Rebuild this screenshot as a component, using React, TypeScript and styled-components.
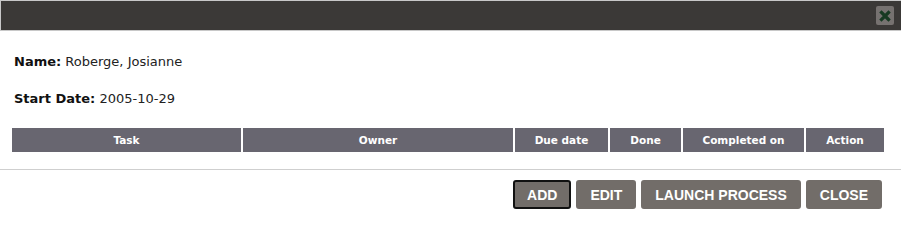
import React, { FC } from "react"
import styled, { createGlobalStyle } from "styled-components"

const columns = [
	{ label: "Task", width: 229 },
	{ label: "Owner", width: 270 },
	{ label: "Due date", width: 93 },
	{ label: "Done", width: 71 },
	{ label: "Completed on", width: 121 },
	{ label: "Action", width: 78 },
]

const actions = ["Add", "Edit", "Launch process", "Close"]

const App: FC = () => {
	return (
		<>
			<GlobalStyle />
			<Dialog>
				<TitleBar>
					<CloseIcon aria-label="close">
						<svg width="12" height="12" viewBox="0 0 12 12">
							<path d="M2.5 2.5 L9.5 9.5 M9.5 2.5 L2.5 9.5" stroke="#173a22" strokeWidth="3.2" strokeLinecap="square" />
						</svg>
					</CloseIcon>
				</TitleBar>
				<Content>
					<Field>
						<Label>Name:</Label> Roberge, Josianne
					</Field>
					<Field>
						<Label>Start Date:</Label> 2005-10-29
					</Field>
					<HeaderRow $cols={columns.map((c) => c.width + "px").join(" ")}>
						{columns.map((c) => (
							<HeaderCell key={c.label}>{c.label}</HeaderCell>
						))}
					</HeaderRow>
				</Content>
				<Footer>
					{actions.map((a, i) => (
						<Button key={a} $focused={i === 0}>
							{a}
						</Button>
					))}
				</Footer>
			</Dialog>
		</>
	)
}

export default App

const GlobalStyle = createGlobalStyle`
	body {
		margin: 0;
		background: #fff;
		font-family: "DejaVu Sans", "Open Sans", sans-serif;
	}
`

const Dialog = styled.div`
	width: 901px;
	height: 216px;

	background: #fff;
`

const TitleBar = styled.div`
	height: 29px;

	display: flex;
	align-items: center;
	justify-content: flex-end;

	padding-right: 7px;

	background: #3b3937;
	border: 1px solid #c8c8c8;
	border-right: 0;
`

const CloseIcon = styled.button`
	width: 18px;
	height: 19px;

	display: flex;
	align-items: center;
	justify-content: center;

	padding: 0;

	background: #767270;
	border: 0;
	border-radius: 2px;
`

const Content = styled.div`
	padding: 22px 15px 17px 12px;
`

const Field = styled.div`
	height: 18px;

	margin: 0 0 19px 2px;

	color: #222;
	font-size: 13px;
	line-height: 18px;
`

const Label = styled.span`
	font-weight: bold;
	color: #111;
`

const HeaderRow = styled.div<{ $cols: string }>`
	display: grid;
	grid-template-columns: ${(p) => p.$cols};
	gap: 2px;

	margin-top: 20px;
`

const HeaderCell = styled.div`
	height: 24px;

	color: #fff;
	font-size: 10.5px;
	font-weight: bold;
	line-height: 24px;
	text-align: center;

	background: #686670;
`

const Footer = styled.div`
	display: flex;
	justify-content: flex-end;
	gap: 5px;

	padding: 10px 19px 0 0;

	border-top: 1px solid #cfcfcf;
`

const Button = styled.button<{ $focused?: boolean }>`
	height: 29px;

	padding: 0 12px;

	color: #fff;
	font-family: "Liberation Sans", Arial, sans-serif;
	font-size: 14px;
	font-weight: bold;
	text-transform: uppercase;

	background: #726d69;
	border: 2px solid ${(p) => (p.$focused ? "#111" : "#726d69")};
	border-radius: 3px;
`
